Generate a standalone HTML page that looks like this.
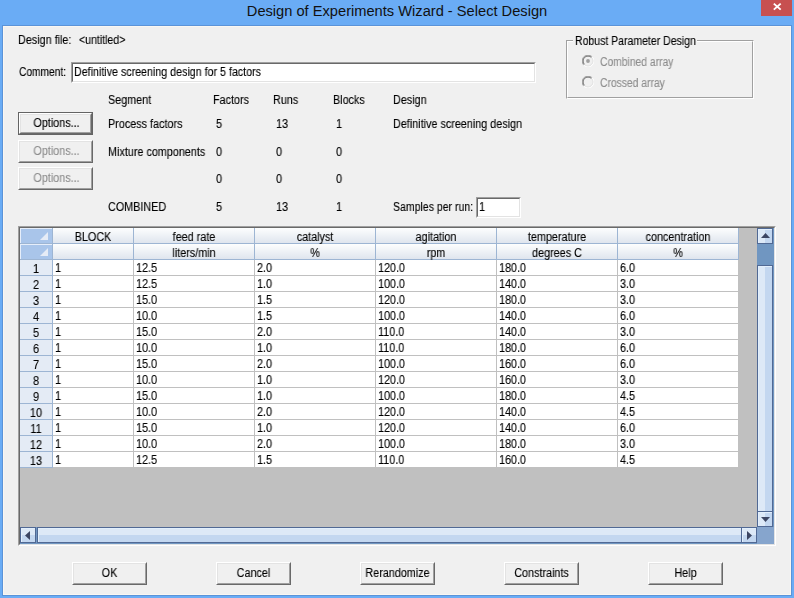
<!DOCTYPE html><html><head><meta charset="utf-8"><style>
*{margin:0;padding:0;box-sizing:border-box}
html,body{width:794px;height:598px;overflow:hidden;background:#6aacf5}
body{position:relative;font-family:"Liberation Sans",sans-serif}
.a{position:absolute}
.t{position:absolute;white-space:pre;font-size:12px;line-height:14px;color:#000;transform:scaleX(0.9);transform-origin:0 0;will-change:transform;-webkit-text-stroke:0.12px currentColor}
.c{text-align:center;transform-origin:50% 0}
.g{color:#8d8d8d}
.btn{position:absolute;background:#f0f0f0;border-top:1px solid #fff;border-left:1px solid #fff;border-right:1px solid #696969;border-bottom:1px solid #696969}
.btn::before{content:"";position:absolute;left:0;top:0;right:0;bottom:0;border-top:1px solid #e3e3e3;border-left:1px solid #e3e3e3;border-right:1px solid #a0a0a0;border-bottom:1px solid #a0a0a0}
.sunk{position:absolute;border-top:1px solid #a0a0a0;border-left:1px solid #a0a0a0;border-right:1px solid #fff;border-bottom:1px solid #fff}
.sunk>.in{position:absolute;left:0;top:0;right:0;bottom:0;border-top:1px solid #696969;border-left:1px solid #696969;border-right:1px solid #e3e3e3;border-bottom:1px solid #e3e3e3;background:#fff}
</style></head><body><div class="a" style="left:2px;top:25px;width:790px;height:571px;border:1px solid #5b93d8"></div>
<div class="a" style="left:3px;top:26px;width:788px;height:569px;background:#f0f0f0;border:1px solid #faf7f2"></div>
<div class="a" style="left:0;width:794px;text-align:center;font-size:15.5px;line-height:20px;top:1px;color:#111;transform:scaleX(0.945);transform-origin:397px 0;white-space:pre">Design of Experiments Wizard - Select Design</div>
<div class="a" style="left:761px;top:0;width:31px;height:16px;background:#c75050"></div>
<svg class="a" style="left:761px;top:0" width="31" height="16"><path d="M12.8 3.6L19.7 9.6M19.7 3.6L12.8 9.6" stroke="#fff" stroke-width="1.9"/></svg>
<div class="t" style="left:18px;top:33px;">Design file:</div>
<div class="t" style="left:79px;top:33px;transform:scaleX(0.88)">&lt;untitled&gt;</div>
<div class="t" style="left:19px;top:65px;transform:scaleX(0.85)">Comment:</div>
<div class="sunk" style="left:71px;top:62px;width:465px;height:21px"><div class="in"></div></div>
<div class="t" style="left:74px;top:65px;transform:scaleX(0.89)">Definitive screening design for 5 factors</div>
<div class="a" style="left:566px;top:40px;width:188px;height:59px;border:1px solid #a0a0a0;border-right-color:#fff;border-bottom-color:#fff"></div>
<div class="a" style="left:567px;top:41px;width:186px;height:57px;border:1px solid #fff;border-right-color:#a0a0a0;border-bottom-color:#a0a0a0"></div>
<div class="a" style="left:573px;top:34px;width:124px;height:12px;background:#f0f0f0"></div>
<div class="t" style="left:575px;top:34px;transform:scaleX(0.875)">Robust Parameter Design</div>
<svg class="a" style="left:582px;top:55px" width="12" height="12"><circle cx="6" cy="6" r="5.5" fill="#f0f0f0"/><path d="M10.2 1.8A5.5 5.5 0 0 0 1.8 10.2" fill="none" stroke="#a0a0a0" stroke-width="1"/><path d="M9.5 2.5A4.5 4.5 0 0 0 2.5 9.5" fill="none" stroke="#696969" stroke-width="1"/><path d="M1.8 10.2A5.5 5.5 0 0 0 10.2 1.8" fill="none" stroke="#fff" stroke-width="1"/><path d="M2.5 9.5A4.5 4.5 0 0 0 9.5 2.5" fill="none" stroke="#e3e3e3" stroke-width="1"/><circle cx="6" cy="6" r="1.9" fill="#a0a0a0"/></svg>
<svg class="a" style="left:582px;top:76px" width="12" height="12"><circle cx="6" cy="6" r="5.5" fill="#f0f0f0"/><path d="M10.2 1.8A5.5 5.5 0 0 0 1.8 10.2" fill="none" stroke="#a0a0a0" stroke-width="1"/><path d="M9.5 2.5A4.5 4.5 0 0 0 2.5 9.5" fill="none" stroke="#696969" stroke-width="1"/><path d="M1.8 10.2A5.5 5.5 0 0 0 10.2 1.8" fill="none" stroke="#fff" stroke-width="1"/><path d="M2.5 9.5A4.5 4.5 0 0 0 9.5 2.5" fill="none" stroke="#e3e3e3" stroke-width="1"/></svg>
<div class="t g" style="left:600px;top:55px;transform:scaleX(0.86)">Combined array</div>
<div class="t g" style="left:600px;top:76px;transform:scaleX(0.86)">Crossed array</div>
<div class="t" style="left:108px;top:93px;">Segment</div>
<div class="t" style="left:213px;top:93px;">Factors</div>
<div class="t" style="left:273px;top:93px;">Runs</div>
<div class="t" style="left:333px;top:93px;">Blocks</div>
<div class="t" style="left:393px;top:93px;">Design</div>
<div class="t" style="left:108px;top:117px;">Process factors</div>
<div class="t" style="left:216px;top:117px;">5</div>
<div class="t" style="left:276px;top:117px;">13</div>
<div class="t" style="left:336px;top:117px;">1</div>
<div class="t" style="left:393px;top:117px;">Definitive screening design</div>
<div class="t" style="left:108px;top:145px;">Mixture components</div>
<div class="t" style="left:216px;top:145px;">0</div>
<div class="t" style="left:276px;top:145px;">0</div>
<div class="t" style="left:336px;top:145px;">0</div>
<div class="t" style="left:216px;top:172px;">0</div>
<div class="t" style="left:276px;top:172px;">0</div>
<div class="t" style="left:336px;top:172px;">0</div>
<div class="t" style="left:108px;top:200px;">COMBINED</div>
<div class="t" style="left:216px;top:200px;">5</div>
<div class="t" style="left:276px;top:200px;">13</div>
<div class="t" style="left:336px;top:200px;">1</div>
<div class="t" style="left:393px;top:200px;transform:scaleX(0.877)">Samples per run:</div>
<div class="sunk" style="left:476px;top:197px;width:45px;height:21px"><div class="in"></div></div>
<div class="t" style="left:479px;top:200px;">1</div>
<div class="a" style="left:18px;top:112px;width:75px;height:23px;border:1px solid #646464"></div>
<div class="btn" style="left:19px;top:113px;width:73px;height:21px"></div>
<div class="t c" style="left:19px;width:75px;top:116px;">Options...</div>
<div class="btn" style="left:18px;top:140px;width:75px;height:23px"></div>
<div class="t c g" style="left:19px;width:75px;top:144px;">Options...</div>
<div class="btn" style="left:18px;top:167px;width:75px;height:23px"></div>
<div class="t c g" style="left:19px;width:75px;top:171px;">Options...</div>
<div class="btn" style="left:72px;top:562px;width:75px;height:23px"></div>
<div class="t c" style="left:72px;width:75px;top:566px;">OK</div>
<div class="btn" style="left:216px;top:562px;width:75px;height:23px"></div>
<div class="t c" style="left:216px;width:75px;top:566px;">Cancel</div>
<div class="btn" style="left:360px;top:562px;width:75px;height:23px"></div>
<div class="t c" style="left:360px;width:75px;top:566px;">Rerandomize</div>
<div class="btn" style="left:504px;top:562px;width:75px;height:23px"></div>
<div class="t c" style="left:504px;width:75px;top:566px;">Constraints</div>
<div class="btn" style="left:648px;top:562px;width:75px;height:23px"></div>
<div class="t c" style="left:648px;width:75px;top:566px;">Help</div>
<div class="sunk" style="left:18px;top:226px;width:758px;height:320px"><div class="in" style="background:#c0c0c0"></div></div>
<div class="a" style="left:20px;top:228px;width:32px;height:15px;background:#a9c5ea;border-top:1px solid #e6eefa;border-left:1px solid #e6eefa"></div>
<svg class="a" style="left:40px;top:232px" width="8" height="8"><path d="M8 0V8H0Z" fill="#e6ecf6"/></svg>
<div class="a" style="left:20px;top:243px;width:719px;height:1px;background:#9db5d3"></div>
<div class="a" style="left:53px;top:228px;width:80px;height:15px;background:linear-gradient(#fdfefe,#dfe5ee)"></div>
<div class="a" style="left:134px;top:228px;width:120px;height:15px;background:linear-gradient(#fdfefe,#dfe5ee)"></div>
<div class="a" style="left:255px;top:228px;width:120px;height:15px;background:linear-gradient(#fdfefe,#dfe5ee)"></div>
<div class="a" style="left:376px;top:228px;width:120px;height:15px;background:linear-gradient(#fdfefe,#dfe5ee)"></div>
<div class="a" style="left:497px;top:228px;width:120px;height:15px;background:linear-gradient(#fdfefe,#dfe5ee)"></div>
<div class="a" style="left:618px;top:228px;width:120px;height:15px;background:linear-gradient(#fdfefe,#dfe5ee)"></div>
<div class="a" style="left:20px;top:244px;width:32px;height:15px;background:#a9c5ea;border-top:1px solid #e6eefa;border-left:1px solid #e6eefa"></div>
<svg class="a" style="left:40px;top:248px" width="8" height="8"><path d="M8 0V8H0Z" fill="#e6ecf6"/></svg>
<div class="a" style="left:20px;top:259px;width:719px;height:1px;background:#9db5d3"></div>
<div class="a" style="left:53px;top:244px;width:80px;height:15px;background:linear-gradient(#fdfefe,#dfe5ee)"></div>
<div class="a" style="left:134px;top:244px;width:120px;height:15px;background:linear-gradient(#fdfefe,#dfe5ee)"></div>
<div class="a" style="left:255px;top:244px;width:120px;height:15px;background:linear-gradient(#fdfefe,#dfe5ee)"></div>
<div class="a" style="left:376px;top:244px;width:120px;height:15px;background:linear-gradient(#fdfefe,#dfe5ee)"></div>
<div class="a" style="left:497px;top:244px;width:120px;height:15px;background:linear-gradient(#fdfefe,#dfe5ee)"></div>
<div class="a" style="left:618px;top:244px;width:120px;height:15px;background:linear-gradient(#fdfefe,#dfe5ee)"></div>
<div class="a" style="left:52px;top:228px;width:1px;height:240px;background:#9db5d3"></div>
<div class="a" style="left:133px;top:228px;width:1px;height:240px;background:#9db5d3"></div>
<div class="a" style="left:254px;top:228px;width:1px;height:240px;background:#9db5d3"></div>
<div class="a" style="left:375px;top:228px;width:1px;height:240px;background:#9db5d3"></div>
<div class="a" style="left:496px;top:228px;width:1px;height:240px;background:#9db5d3"></div>
<div class="a" style="left:617px;top:228px;width:1px;height:240px;background:#9db5d3"></div>
<div class="a" style="left:738px;top:228px;width:1px;height:240px;background:#9db5d3"></div>
<div class="t c" style="left:53px;width:80px;top:230px;">BLOCK</div>
<div class="t c" style="left:134px;width:120px;top:230px;">feed rate</div>
<div class="t c" style="left:134px;width:120px;top:246px;">liters/min</div>
<div class="t c" style="left:255px;width:120px;top:230px;">catalyst</div>
<div class="t c" style="left:255px;width:120px;top:246px;">%</div>
<div class="t c" style="left:376px;width:120px;top:230px;">agitation</div>
<div class="t c" style="left:376px;width:120px;top:246px;">rpm</div>
<div class="t c" style="left:497px;width:120px;top:230px;">temperature</div>
<div class="t c" style="left:497px;width:120px;top:246px;">degrees C</div>
<div class="t c" style="left:618px;width:120px;top:230px;">concentration</div>
<div class="t c" style="left:618px;width:120px;top:246px;">%</div>
<div class="a" style="left:20px;top:260px;width:32px;height:15px;background:#e4ebf5"></div>
<div class="a" style="left:20px;top:275px;width:32px;height:1px;background:#9db5d3"></div>
<div class="t c" style="left:20px;width:32px;top:262px;">1</div>
<div class="a" style="left:53px;top:260px;width:686px;height:15px;background:#fff"></div>
<div class="a" style="left:53px;top:275px;width:686px;height:1px;background:#c0c0c0"></div>
<div class="t" style="left:55px;top:261px;">1</div>
<div class="t" style="left:136px;top:261px;">12.5</div>
<div class="t" style="left:257px;top:261px;">2.0</div>
<div class="t" style="left:378px;top:261px;">120.0</div>
<div class="t" style="left:499px;top:261px;">180.0</div>
<div class="t" style="left:620px;top:261px;">6.0</div>
<div class="a" style="left:20px;top:276px;width:32px;height:15px;background:#e4ebf5"></div>
<div class="a" style="left:20px;top:291px;width:32px;height:1px;background:#9db5d3"></div>
<div class="t c" style="left:20px;width:32px;top:278px;">2</div>
<div class="a" style="left:53px;top:276px;width:686px;height:15px;background:#fff"></div>
<div class="a" style="left:53px;top:291px;width:686px;height:1px;background:#c0c0c0"></div>
<div class="t" style="left:55px;top:277px;">1</div>
<div class="t" style="left:136px;top:277px;">12.5</div>
<div class="t" style="left:257px;top:277px;">1.0</div>
<div class="t" style="left:378px;top:277px;">100.0</div>
<div class="t" style="left:499px;top:277px;">140.0</div>
<div class="t" style="left:620px;top:277px;">3.0</div>
<div class="a" style="left:20px;top:292px;width:32px;height:15px;background:#e4ebf5"></div>
<div class="a" style="left:20px;top:307px;width:32px;height:1px;background:#9db5d3"></div>
<div class="t c" style="left:20px;width:32px;top:294px;">3</div>
<div class="a" style="left:53px;top:292px;width:686px;height:15px;background:#fff"></div>
<div class="a" style="left:53px;top:307px;width:686px;height:1px;background:#c0c0c0"></div>
<div class="t" style="left:55px;top:293px;">1</div>
<div class="t" style="left:136px;top:293px;">15.0</div>
<div class="t" style="left:257px;top:293px;">1.5</div>
<div class="t" style="left:378px;top:293px;">120.0</div>
<div class="t" style="left:499px;top:293px;">180.0</div>
<div class="t" style="left:620px;top:293px;">3.0</div>
<div class="a" style="left:20px;top:308px;width:32px;height:15px;background:#e4ebf5"></div>
<div class="a" style="left:20px;top:323px;width:32px;height:1px;background:#9db5d3"></div>
<div class="t c" style="left:20px;width:32px;top:310px;">4</div>
<div class="a" style="left:53px;top:308px;width:686px;height:15px;background:#fff"></div>
<div class="a" style="left:53px;top:323px;width:686px;height:1px;background:#c0c0c0"></div>
<div class="t" style="left:55px;top:309px;">1</div>
<div class="t" style="left:136px;top:309px;">10.0</div>
<div class="t" style="left:257px;top:309px;">1.5</div>
<div class="t" style="left:378px;top:309px;">100.0</div>
<div class="t" style="left:499px;top:309px;">140.0</div>
<div class="t" style="left:620px;top:309px;">6.0</div>
<div class="a" style="left:20px;top:324px;width:32px;height:15px;background:#e4ebf5"></div>
<div class="a" style="left:20px;top:339px;width:32px;height:1px;background:#9db5d3"></div>
<div class="t c" style="left:20px;width:32px;top:326px;">5</div>
<div class="a" style="left:53px;top:324px;width:686px;height:15px;background:#fff"></div>
<div class="a" style="left:53px;top:339px;width:686px;height:1px;background:#c0c0c0"></div>
<div class="t" style="left:55px;top:325px;">1</div>
<div class="t" style="left:136px;top:325px;">15.0</div>
<div class="t" style="left:257px;top:325px;">2.0</div>
<div class="t" style="left:378px;top:325px;">110.0</div>
<div class="t" style="left:499px;top:325px;">140.0</div>
<div class="t" style="left:620px;top:325px;">3.0</div>
<div class="a" style="left:20px;top:340px;width:32px;height:15px;background:#e4ebf5"></div>
<div class="a" style="left:20px;top:355px;width:32px;height:1px;background:#9db5d3"></div>
<div class="t c" style="left:20px;width:32px;top:342px;">6</div>
<div class="a" style="left:53px;top:340px;width:686px;height:15px;background:#fff"></div>
<div class="a" style="left:53px;top:355px;width:686px;height:1px;background:#c0c0c0"></div>
<div class="t" style="left:55px;top:341px;">1</div>
<div class="t" style="left:136px;top:341px;">10.0</div>
<div class="t" style="left:257px;top:341px;">1.0</div>
<div class="t" style="left:378px;top:341px;">110.0</div>
<div class="t" style="left:499px;top:341px;">180.0</div>
<div class="t" style="left:620px;top:341px;">6.0</div>
<div class="a" style="left:20px;top:356px;width:32px;height:15px;background:#e4ebf5"></div>
<div class="a" style="left:20px;top:371px;width:32px;height:1px;background:#9db5d3"></div>
<div class="t c" style="left:20px;width:32px;top:358px;">7</div>
<div class="a" style="left:53px;top:356px;width:686px;height:15px;background:#fff"></div>
<div class="a" style="left:53px;top:371px;width:686px;height:1px;background:#c0c0c0"></div>
<div class="t" style="left:55px;top:357px;">1</div>
<div class="t" style="left:136px;top:357px;">15.0</div>
<div class="t" style="left:257px;top:357px;">2.0</div>
<div class="t" style="left:378px;top:357px;">100.0</div>
<div class="t" style="left:499px;top:357px;">160.0</div>
<div class="t" style="left:620px;top:357px;">6.0</div>
<div class="a" style="left:20px;top:372px;width:32px;height:15px;background:#e4ebf5"></div>
<div class="a" style="left:20px;top:387px;width:32px;height:1px;background:#9db5d3"></div>
<div class="t c" style="left:20px;width:32px;top:374px;">8</div>
<div class="a" style="left:53px;top:372px;width:686px;height:15px;background:#fff"></div>
<div class="a" style="left:53px;top:387px;width:686px;height:1px;background:#c0c0c0"></div>
<div class="t" style="left:55px;top:373px;">1</div>
<div class="t" style="left:136px;top:373px;">10.0</div>
<div class="t" style="left:257px;top:373px;">1.0</div>
<div class="t" style="left:378px;top:373px;">120.0</div>
<div class="t" style="left:499px;top:373px;">160.0</div>
<div class="t" style="left:620px;top:373px;">3.0</div>
<div class="a" style="left:20px;top:388px;width:32px;height:15px;background:#e4ebf5"></div>
<div class="a" style="left:20px;top:403px;width:32px;height:1px;background:#9db5d3"></div>
<div class="t c" style="left:20px;width:32px;top:390px;">9</div>
<div class="a" style="left:53px;top:388px;width:686px;height:15px;background:#fff"></div>
<div class="a" style="left:53px;top:403px;width:686px;height:1px;background:#c0c0c0"></div>
<div class="t" style="left:55px;top:389px;">1</div>
<div class="t" style="left:136px;top:389px;">15.0</div>
<div class="t" style="left:257px;top:389px;">1.0</div>
<div class="t" style="left:378px;top:389px;">100.0</div>
<div class="t" style="left:499px;top:389px;">180.0</div>
<div class="t" style="left:620px;top:389px;">4.5</div>
<div class="a" style="left:20px;top:404px;width:32px;height:15px;background:#e4ebf5"></div>
<div class="a" style="left:20px;top:419px;width:32px;height:1px;background:#9db5d3"></div>
<div class="t c" style="left:20px;width:32px;top:406px;">10</div>
<div class="a" style="left:53px;top:404px;width:686px;height:15px;background:#fff"></div>
<div class="a" style="left:53px;top:419px;width:686px;height:1px;background:#c0c0c0"></div>
<div class="t" style="left:55px;top:405px;">1</div>
<div class="t" style="left:136px;top:405px;">10.0</div>
<div class="t" style="left:257px;top:405px;">2.0</div>
<div class="t" style="left:378px;top:405px;">120.0</div>
<div class="t" style="left:499px;top:405px;">140.0</div>
<div class="t" style="left:620px;top:405px;">4.5</div>
<div class="a" style="left:20px;top:420px;width:32px;height:15px;background:#e4ebf5"></div>
<div class="a" style="left:20px;top:435px;width:32px;height:1px;background:#9db5d3"></div>
<div class="t c" style="left:20px;width:32px;top:422px;">11</div>
<div class="a" style="left:53px;top:420px;width:686px;height:15px;background:#fff"></div>
<div class="a" style="left:53px;top:435px;width:686px;height:1px;background:#c0c0c0"></div>
<div class="t" style="left:55px;top:421px;">1</div>
<div class="t" style="left:136px;top:421px;">15.0</div>
<div class="t" style="left:257px;top:421px;">1.0</div>
<div class="t" style="left:378px;top:421px;">120.0</div>
<div class="t" style="left:499px;top:421px;">140.0</div>
<div class="t" style="left:620px;top:421px;">6.0</div>
<div class="a" style="left:20px;top:436px;width:32px;height:15px;background:#e4ebf5"></div>
<div class="a" style="left:20px;top:451px;width:32px;height:1px;background:#9db5d3"></div>
<div class="t c" style="left:20px;width:32px;top:438px;">12</div>
<div class="a" style="left:53px;top:436px;width:686px;height:15px;background:#fff"></div>
<div class="a" style="left:53px;top:451px;width:686px;height:1px;background:#c0c0c0"></div>
<div class="t" style="left:55px;top:437px;">1</div>
<div class="t" style="left:136px;top:437px;">10.0</div>
<div class="t" style="left:257px;top:437px;">2.0</div>
<div class="t" style="left:378px;top:437px;">100.0</div>
<div class="t" style="left:499px;top:437px;">180.0</div>
<div class="t" style="left:620px;top:437px;">3.0</div>
<div class="a" style="left:20px;top:452px;width:32px;height:15px;background:#e4ebf5"></div>
<div class="a" style="left:20px;top:467px;width:32px;height:1px;background:#9db5d3"></div>
<div class="t c" style="left:20px;width:32px;top:454px;">13</div>
<div class="a" style="left:53px;top:452px;width:686px;height:15px;background:#fff"></div>
<div class="a" style="left:53px;top:467px;width:686px;height:1px;background:#c0c0c0"></div>
<div class="t" style="left:55px;top:453px;">1</div>
<div class="t" style="left:136px;top:453px;">12.5</div>
<div class="t" style="left:257px;top:453px;">1.5</div>
<div class="t" style="left:378px;top:453px;">110.0</div>
<div class="t" style="left:499px;top:453px;">160.0</div>
<div class="t" style="left:620px;top:453px;">4.5</div>
<div class="a" style="left:133px;top:260px;width:1px;height:208px;background:#c0c0c0"></div>
<div class="a" style="left:254px;top:260px;width:1px;height:208px;background:#c0c0c0"></div>
<div class="a" style="left:375px;top:260px;width:1px;height:208px;background:#c0c0c0"></div>
<div class="a" style="left:496px;top:260px;width:1px;height:208px;background:#c0c0c0"></div>
<div class="a" style="left:617px;top:260px;width:1px;height:208px;background:#c0c0c0"></div>
<div class="a" style="left:738px;top:260px;width:1px;height:208px;background:#c0c0c0"></div>
<div class="a" style="left:757px;top:228px;width:17px;height:316px;background:#7096c1"></div>
<div class="a" style="left:757px;top:228px;width:16px;height:16px;border:1px solid #516994;background:linear-gradient(to right,#dde9f7 0,#dde9f7 50%,#c3d7f0 50%,#c3d7f0 100%);box-shadow:inset 1px 1px 0 #e2effc"></div>
<svg class="a" style="left:757px;top:228px" width="16" height="16"><path d="M4 10H13L8.5 5Z" fill="#3c4663"/></svg>
<div class="a" style="left:757px;top:265px;width:16px;height:247px;border:1px solid #516994;background:linear-gradient(to right,#dde9f7 0,#dde9f7 50%,#c3d7f0 50%,#c3d7f0 100%);box-shadow:inset 1px 1px 0 #e2effc"></div>
<div class="a" style="left:757px;top:511px;width:16px;height:16px;border:1px solid #516994;background:linear-gradient(to right,#dde9f7 0,#dde9f7 50%,#c3d7f0 50%,#c3d7f0 100%);box-shadow:inset 1px 1px 0 #e2effc"></div>
<svg class="a" style="left:757px;top:511px" width="16" height="16"><path d="M4 6H13L8.5 11Z" fill="#3c4663"/></svg>
<div class="a" style="left:20px;top:527px;width:737px;height:17px;background:#7096c1"></div>
<div class="a" style="left:20px;top:527px;width:16px;height:16px;border:1px solid #516994;background:linear-gradient(to bottom,#dde9f7 0,#dde9f7 50%,#c3d7f0 50%,#c3d7f0 100%);box-shadow:inset 1px 1px 0 #e2effc"></div>
<svg class="a" style="left:20px;top:527px" width="16" height="16"><path d="M10 4V13L5 8.5Z" fill="#3c4663"/></svg>
<div class="a" style="left:37px;top:527px;width:705px;height:16px;border:1px solid #516994;background:linear-gradient(to bottom,#dde9f7 0,#dde9f7 50%,#c3d7f0 50%,#c3d7f0 100%);box-shadow:inset 1px 1px 0 #e2effc"></div>
<div class="a" style="left:741px;top:527px;width:16px;height:16px;border:1px solid #516994;background:linear-gradient(to bottom,#dde9f7 0,#dde9f7 50%,#c3d7f0 50%,#c3d7f0 100%);box-shadow:inset 1px 1px 0 #e2effc"></div>
<svg class="a" style="left:741px;top:527px" width="16" height="16"><path d="M6 4V13L11 8.5Z" fill="#3c4663"/></svg>
<div class="a" style="left:757px;top:527px;width:17px;height:17px;background:#86a5cd"></div></body></html>
